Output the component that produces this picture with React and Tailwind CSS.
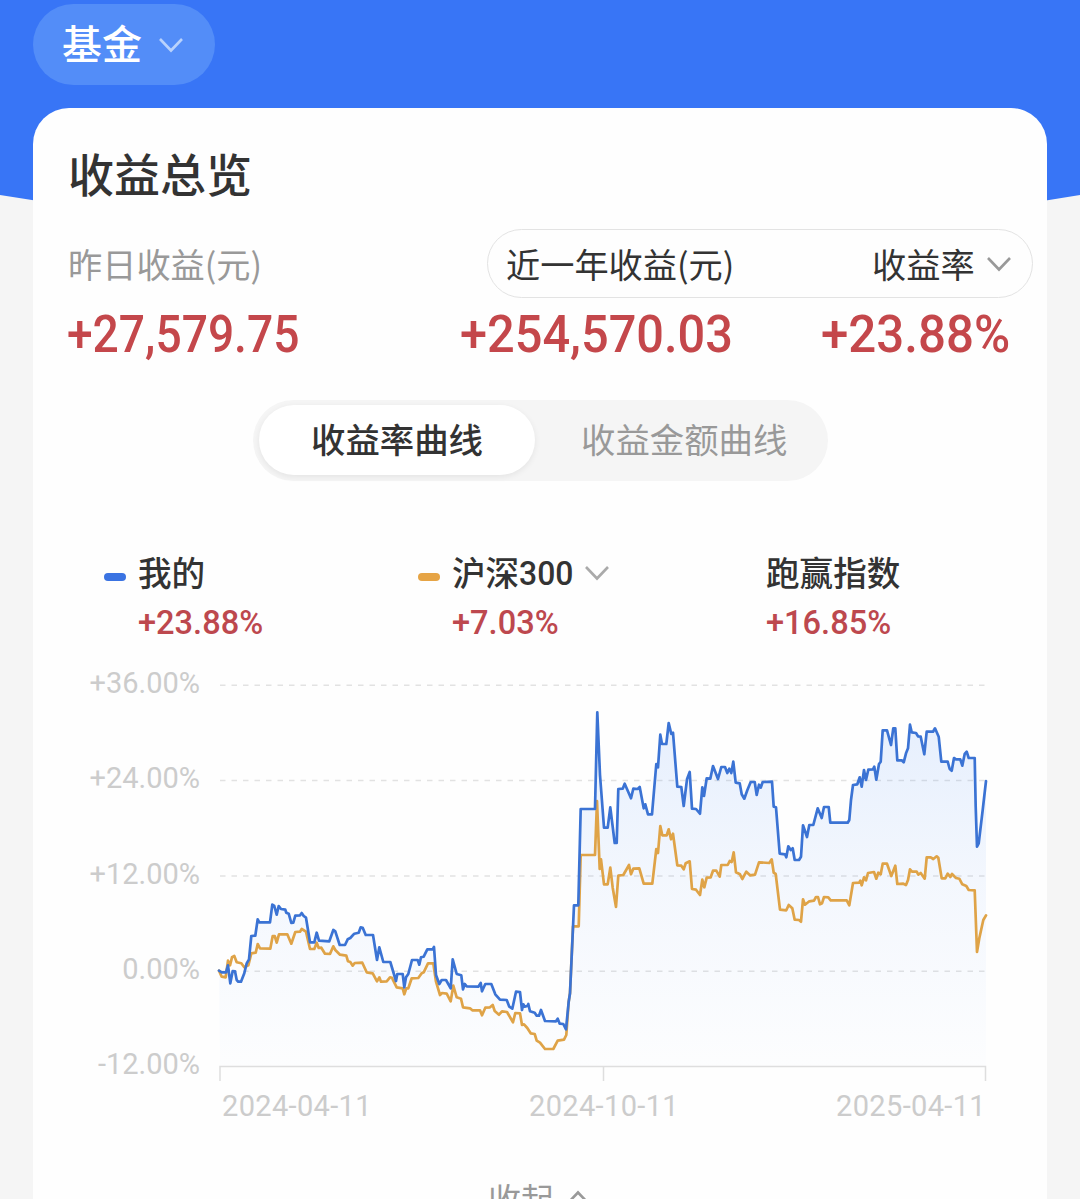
import React from "react";

const CJK = "font-['Noto_Sans_CJK_SC',sans-serif]";
const NUM = "font-['Roboto',sans-serif]";

// Each run holds an origin in pixels and x,y pairs in thirds of a pixel.
const mineRuns = [
  [210, 880, "27,272 35,277 48,277 54,256 61,310 68,273 75,274 80,300 85,305 93,305 103,280 110,250 117,238 124,168 136,167 143,118 148,127 180,127 187,74 193,78 200,104 206,78 213,87 226,89 229,98 236,101 244,129 250,128 256,107 270,106 275,99 281,108 288,113 300,187 313,187 320,158 327,182 358,184 370,150 376,154 389,195 405,195 413,178 421,174 433,161 446,158 452,142 458,143 467,165 489,165 501,240 508,202 520,246 541,246"],
  [390, 900, "18,243 22,222 38,222 43,262 48,232 55,222 66,180 83,180 88,194 93,172 101,170 112,148 128,148 132,141 138,225 148,252 155,240 168,240 182,265 188,178 200,222 214,226 219,268 224,252 230,259 265,260 272,249 276,274 286,252 304,252 316,283 330,299 350,300 358,320 367,326 378,275 390,276 396,330 400,313 404,320 412,318 415,312 420,334 434,338 440,347 447,347 453,330 465,363 498,364 503,356 509,371 520,372 528,388 536,305 540,280"],
  [560, 690, "42,646 55,646 62,357 105,357 112,67 120,255 132,413 143,413 151,352 164,459 170,459 175,297 188,296 194,281 213,325 220,296 233,297 239,291 251,355 256,343 264,373 276,373 289,222 294,232 301,134 306,162 319,162 326,99 334,132 339,128 352,290 364,291 371,348 381,268 389,246 396,356 408,357 420,371 427,292 432,318 440,265 451,266 459,228 474,267 484,231 495,231 502,249 508,236 514,249 520,215 527,278 539,280 545,313 553,326 562,301 572,276 584,276 590,315 597,284 602,293 608,276"],
  [770, 690, "6,275 11,350 18,352 29,491 45,493 49,502 55,469 62,480 68,475 74,510 87,510 93,500 99,406 111,441 118,405 130,405 143,355 155,384 162,351 176,351 181,398 233,398 238,390 243,330 249,285 262,283 269,262 275,290 282,240 288,270 295,239 309,238 313,230 319,269 327,222 332,215 338,121 351,121 363,165 370,115 376,115 382,211 395,211 401,217 408,190 414,175 420,104 425,127 438,129 444,139 452,140 463,193 470,125 489,125 495,115 506,140 514,215 533,215 539,237 545,242 552,204 558,208 571,208 577,227 584,192 590,185 596,204 614,204 617,350 621,470 626,460 638,360 648,273"],
];

const indexRuns = [
  [210, 880, "27,272 35,290 47,292 54,242 60,256 66,232 73,228 80,247 94,250 103,262 115,256 124,220 137,218 143,192 150,205 181,206 188,168 194,168 200,188 207,163 232,163 244,191 256,156 270,155 275,147 288,155 300,207 313,207 320,188 326,204 334,203 345,221 360,222 370,199 376,210 390,224 409,227 414,244 421,246 428,257 434,249 457,248 470,277 488,280 501,304 508,292 513,305 530,304 540,292 546,293"],
  [390, 900, "8,238 20,262 38,265 43,283 49,265 55,265 65,235 85,234 95,220 101,217 114,190 130,190 138,245 150,285 156,279 170,281 182,304 190,257 200,292 213,296 219,322 240,325 247,331 270,331 276,346 286,323 300,322 308,315 314,333 327,344 336,334 351,336 369,367 376,339 390,340 396,375 402,373 412,384 422,400 434,402 440,422 450,428 465,447 490,447 503,422 522,419 529,405 530,388 536,305 540,280 549,79 566,79"],
  [560, 690, "62,495 105,495 111,333 119,537 123,508 132,583 143,583 151,533 158,593 168,651 175,557 190,555 207,525 213,553 220,536 238,535 251,581 277,581 289,477 294,489 301,408 307,436 320,436 326,418 333,448 339,431 352,526 364,527 371,538 377,520 389,514 396,597 408,599 420,615 427,569 433,592 440,563 452,562 459,542 469,542 479,560 484,525 503,525 509,513 515,516 521,487 528,547 540,553 547,567 559,545 570,556 585,554 597,517 628,519 635,508"],
  [770, 690, "11,548 17,552 30,659 49,661 56,645 67,655 74,689 87,690 93,695 99,628 105,644 118,634 132,632 138,621 144,621 150,643 156,640 162,621 175,622 182,631 230,631 238,646 249,579 268,578 271,572 275,586 282,562 288,571 294,549 312,546 319,566 325,548 332,553 338,521 351,521 364,558 376,527 382,582 400,581 408,585 414,570 420,538 426,545 440,545 445,554 452,549 464,566 470,502 482,502 490,507 500,499 505,503 515,565 526,565 533,551 541,561 546,552 558,564 568,566 577,583 589,588 596,600 614,601 621,786 628,745 640,690 648,676"],
];

const toPoints = (runs) =>
  runs
    .flatMap(([ox, oy, pairs]) =>
      pairs.split(" ").map((pair) => {
        const [x, y] = pair.split(",").map(Number);
        return `${(ox + x / 3).toFixed(1)},${(oy + y / 3).toFixed(1)}`;
      })
    )
    .join(" ");

const minePoints = toPoints(mineRuns);
const indexPoints = toPoints(indexRuns);

function Chevron({ className, up }) {
  return (
    <svg viewBox="0 0 24 16" className={className} fill="none" stroke="currentColor" strokeWidth="2.6">
      <path d={up ? "M1 14 12 2.5 23 14" : "M1 2 12 13.5 23 2"} />
    </svg>
  );
}

function Chart() {
  return (
    <svg viewBox="210 660 790 430" className="block h-[430px] w-[790px]" fill="none">
      <defs>
        <linearGradient id="area" gradientUnits="userSpaceOnUse" x1="0" y1="700" x2="0" y2="1066">
          <stop offset="0" stopColor="#3b82f6" stopOpacity="0.13" />
          <stop offset="0.5" stopColor="#3b82f6" stopOpacity="0.055" />
          <stop offset="1" stopColor="#3b82f6" stopOpacity="0.008" />
        </linearGradient>
      </defs>
      {[685.3, 780.6, 875.9, 971.2].map((y) => (
        <path key={y} d={`M220 ${y}H986`} stroke="#e2e2e2" strokeWidth="1.5" strokeDasharray="5.5 6" />
      ))}
      <polygon points={`${minePoints} 986,1066 220,1066`} fill="url(#area)" />
      <path d="M220 1081V1066.5H985.5V1081M603.5 1066.5V1081" stroke="#dedede" strokeWidth="1.5" />
      <polyline points={indexPoints} stroke="#dfa347" strokeWidth="2.7" strokeLinejoin="round" strokeLinecap="round" />
      <polyline points={minePoints} stroke="#3b73d4" strokeWidth="2.7" strokeLinejoin="round" strokeLinecap="round" />
    </svg>
  );
}

export default function App() {
  return (
    <div className={`relative h-[1199px] w-[1080px] overflow-hidden bg-[#f5f5f5] text-[#333] ${CJK}`}>
      <svg viewBox="0 0 1080 240" className="absolute left-0 top-0 h-[240px] w-[1080px]">
        <path d="M0 0H1080V195Q540 285 0 195Z" fill="#3875f6" />
      </svg>

      <div className="relative flex h-full flex-col px-[33px] pt-1">
        <button className="flex h-[81px] w-[182px] shrink-0 items-center rounded-full bg-[#538df8] pl-[29px] text-white">
          <span className="pb-1 text-[40px] font-medium leading-[77px]">基金</span>
          <Chevron className="ml-[17px] h-4 w-6 text-[#b9d2fc]" />
        </button>

        <main className="mt-[23px] flex h-[1140px] shrink-0 flex-col rounded-[36px] bg-[#fefefe]">
          <h1 className="ml-[35px] mt-[31px] h-[69px] text-[46px] font-medium leading-[66px]">收益总览</h1>

          <div className="mt-[21px] flex h-[69px] items-center">
            <span className="w-[454px] pl-[35px] text-[34.2px] leading-[69px] text-[#999]">昨日收益(元)</span>
            <div className="flex h-[69px] w-[546px] items-center rounded-full border border-[#e3e3e3] pl-[18px] text-[34.2px] leading-[67px]">
              <span className="w-[366px]">近一年收益(元)</span>
              <span>收益率</span>
              <Chevron className="ml-3 h-4 w-6 text-[#999]" />
            </div>
          </div>

          <div className={`mt-[7px] flex h-[60px] text-[51px] font-medium leading-[60px] text-[#c4474b] ${NUM}`}>
            <span className="w-[392px]">
              <span className="ml-[34px] inline-block origin-left scale-x-[0.905]">+27,579.75</span>
            </span>
            <span className="w-[361px]">
              <span className="ml-[35px] inline-block origin-left scale-x-[0.955]">+254,570.03</span>
            </span>
            <span>
              <span className="ml-[35px] inline-block origin-left scale-x-[0.965]">+23.88%</span>
            </span>
          </div>

          <div className="ml-[220px] mt-[35px] flex h-[81px] w-[575px] items-center rounded-full bg-[#f5f5f5] pl-[6px] text-[34.4px]">
            <button className="mb-px h-[70px] w-[276px] rounded-full bg-white text-center font-medium shadow-[0_2px_6px_rgba(0,0,0,0.07)]">
              <span className="block h-[70px] leading-[66px]">收益率曲线</span>
            </button>
            <button className="mb-[5px] ml-[46px] leading-[68px] text-[#999]">收益金额曲线</button>
          </div>

          <div className="ml-[71px] mt-[67px] flex h-[96px] text-[33.6px]">
            {[
              { name: "我的", value: "+23.88%", dash: "bg-[#3a73e2]" },
              { name: "沪深", digits: "300", value: "+7.03%", dash: "bg-[#e6a445]" },
              { name: "跑赢指数", value: "+16.85%" },
            ].map((item) => (
              <div key={item.name} className="flex w-[314px]">
                <span className="w-[34px] pt-[25px]">
                  {item.dash && <span className={`block h-[8px] w-[22px] rounded-full ${item.dash}`} />}
                </span>
                <div>
                  <div className="flex h-[50px] items-center font-medium">
                    <span className="pb-[2px] leading-[48px]">{item.name}</span>
                    {item.digits && (
                      <>
                        <span className={`inline-block w-[54px] origin-left scale-x-95 pt-[2px] font-medium ${NUM}`}>{item.digits}</span>
                        <Chevron className="ml-[12px] h-4 w-6 text-[#aaa]" />
                      </>
                    )}
                  </div>
                  <div className={`h-[46px] origin-left scale-x-[0.97] font-medium leading-[50px] text-[#bd484e] ${NUM}`}>{item.value}</div>
                </div>
              </div>
            ))}
          </div>

          <div className="-mt-[8px] flex">
            <div className={`w-[177px] shrink-0 pr-[10px] text-right text-[29px] text-[#ccc] ${NUM}`}>
              {["+36.00%", "+24.00%", "+12.00%", "0.00%", "-12.00%"].map((label) => (
                <div key={label} className="h-[95.3px] origin-right leading-[95px]">
                  {label}
                </div>
              ))}
            </div>
            <div className="pt-[24px]">
              <Chart />
            </div>
          </div>

          <div className={`-mt-[23px] ml-[189px] flex w-[764px] justify-between text-[29px] leading-[34px] tracking-[0.35px] text-[#ccc] ${NUM}`}>
            <span>2024-04-11</span>
            <span>2024-10-11</span>
            <span>2025-04-11</span>
          </div>

          <div className="ml-[455px] mt-[50px] flex h-[50px] items-center text-[33px] leading-[50px] text-[#999]">
            收起
            <Chevron up className="ml-[12px] h-4 w-6" />
          </div>
        </main>
      </div>
    </div>
  );
}
